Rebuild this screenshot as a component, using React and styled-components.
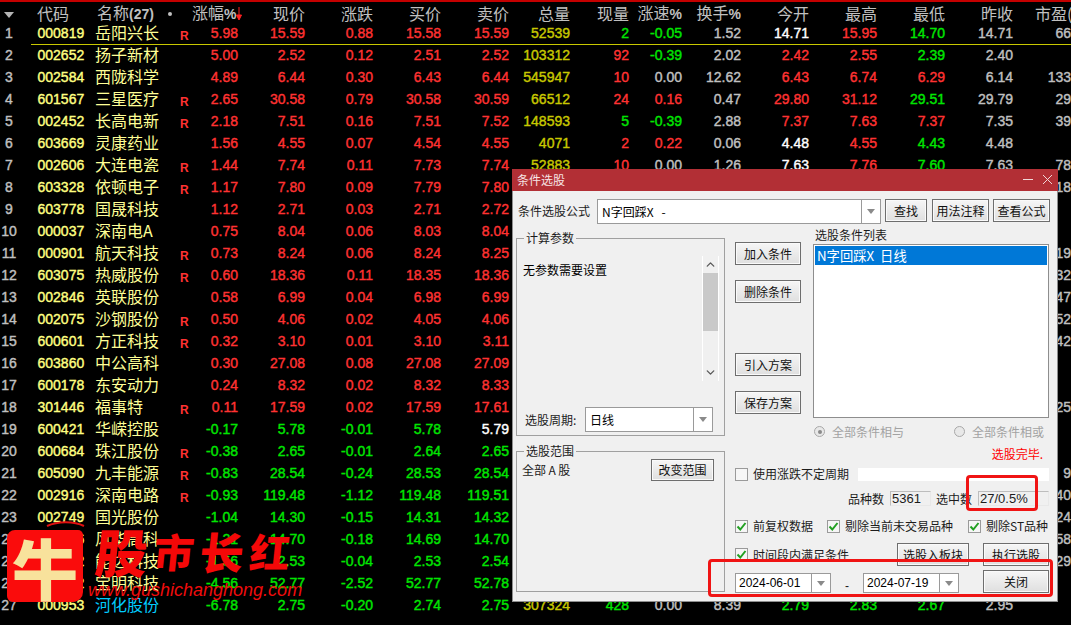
import React from 'react';
import styled, { createGlobalStyle } from 'styled-components';
import { ChevronUp, ChevronDown } from 'lucide-react';

const CJK = '"Noto Sans CJK SC", "Liberation Sans", sans-serif';
const UI = '"Liberation Sans", "Noto Sans CJK SC", sans-serif';
const COLUMNS = '18px 77px 85px 12px 46px 67px 68px 68px 68px 61px 59px 53px 59px 68px 68px 68px 68px 58px';

const TONES = {
    red: '#ff3232',
    green: '#00e600',
    white: '#ffffff',
    gray: '#c0c0c0',
    olive: '#c8c800',
    code: '#ffff80',
    name: '#ffff96',
    cyan: '#00ccff',
};

const GlobalStyle = createGlobalStyle`
    html, body {
        margin: 0;
        padding: 0;
        background: #000;
    }
    #root {
        height: 625px;
    }
`;

const Page = styled.div`
    position: relative;
    width: 1071px;
    height: 625px;
    overflow: hidden;
    background: #000;
    border-top: 2px solid #c40000;
    box-sizing: border-box;
`;

const Row = styled.div`
    position: relative;
    display: grid;
    grid-template-columns: ${COLUMNS};
    height: ${(p) => (p.$header ? '20px' : '22px')};
    align-items: center;
    white-space: nowrap;

    ${(p) => p.$current && `
        &::after {
            content: '';
            position: absolute;
            left: 31px;
            right: 0;
            bottom: -1px;
            height: 1px;
            background: #c8c800;
        }
    `}
`;

const HeadCell = styled.div`
    font-family: ${CJK};
    font-size: 16px;
    line-height: 20px;
    margin-bottom: 8px;
    color: #c0c0c0;
    text-align: ${(p) => (p.$left ? 'left' : 'right')};
    padding-left: ${(p) => p.$pad || 0}px;

    b {
        font-family: ${UI};
        font-size: 14px;
    }
`;

const SortMark = styled.div`
    width: 0;
    height: 0;
    margin: 0 0 5px 4px;
    border-left: 5px solid transparent;
    border-right: 5px solid transparent;
    border-top: 6px solid #b4b4b4;
`;

const HeadDot = styled.span`
    display: inline-block;
    width: 4px;
    height: 4px;
    margin: 0 0 3px 14px;
    border-radius: 50%;
    background: #c0c0c0;
`;

const SortArrow = styled.svg`
    width: 6px;
    height: 14px;
    vertical-align: -2px;
`;

const Cell = styled.div`
    font-family: ${UI};
    font-weight: 400;
    -webkit-text-stroke: 0.4px currentColor;
    font-size: 14px;
    color: ${(p) => TONES[p.$tone] || TONES.gray};
    text-align: right;
`;

const RowNo = styled(Cell)`
    text-align: center;
`;

const CodeCell = styled(Cell)`
    text-align: left;
    padding-left: 19.5px;
`;

const NameCell = styled.div`
    font-family: ${CJK};
    font-size: 16px;
    line-height: 20px;
    margin-bottom: 2px;
    color: ${(p) => TONES[p.$tone]};
`;

const RMark = styled.div`
    font-family: ${UI};
    font-weight: 700;
    font-size: 12px;
    color: #ff3232;
    padding-top: 5px;
`;

/* ---- floating dialog ---- */

const Dialog = styled.div`
    position: absolute;
    left: 512px;
    top: 167px;
    width: 546px;
    height: 433px;
    box-sizing: border-box;
    background: #f0f0f0;
    border: 1px solid #8e8e8e;
    border-top: 0;
    font-family: ${CJK};
    font-size: 12px;
    color: #1c1c1c;
    line-height: 14px;
    white-space: nowrap;
`;

const TitleBar = styled.div`
    display: flex;
    align-items: center;
    height: 22px;
    margin: 0 -1px;
    padding: 0 5px;
    background: #b22f35;
    color: #f6e4e4;
    font-size: 12px;
`;

const WindowIcons = styled.svg`
    margin-left: auto;
    width: 30px;
    height: 12px;
`;

const Body = styled.div`
    padding: 8px 0 0 3px;
`;

const FormulaRow = styled.div`
    display: flex;
    align-items: flex-start;
`;

const FormulaLabel = styled.span`
    width: 72px;
    margin: 5px 7px 0 2px;
`;

const Combo = styled.div`
    display: flex;
    align-items: center;
    flex: none;
    box-sizing: border-box;
    width: ${(p) => p.$w}px;
    height: ${(p) => p.$h}px;
    background: #fff;
    border: 1px solid #9a9a9a;
    margin-right: ${(p) => p.$after || 0}px;
    font-family: ${(p) => (p.$latin ? UI : CJK)};
`;

const ComboText = styled.span`
    flex: 1;
    padding-left: ${(p) => p.$pad || 4}px;
    color: #000;
`;

const ComboButton = styled.span`
    display: flex;
    align-items: center;
    justify-content: center;
    align-self: stretch;
    width: 18px;
    border-left: 1px solid #9a9a9a;

    &::before {
        content: '';
        border-left: 4px solid transparent;
        border-right: 4px solid transparent;
        border-top: 5px solid #8a8a8a;
    }
`;

const Button = styled.div`
    display: flex;
    align-items: center;
    justify-content: center;
    flex: none;
    box-sizing: border-box;
    width: ${(p) => p.$w || 66}px;
    height: ${(p) => p.$h || 23}px;
    margin-left: ${(p) => p.$before || 0}px;
    margin-top: ${(p) => p.$above || 0}px;
    border: 1px solid #6e6e6e;
    box-shadow: inset 0 0 0 1px #fafafa;
    background: linear-gradient(#f6f6f6, #dfdfdf);
    color: #111;
`;

const Columns = styled.div`
    display: flex;
    margin-top: 4px;
`;

const LeftColumn = styled.div`
    width: 209px;
    padding-top: 10px;
`;

const GroupBox = styled.div`
    position: relative;
    box-sizing: border-box;
    height: ${(p) => p.$h}px;
    margin-bottom: 15px;
    border: 1px solid #a0a0a0;
`;

const GroupTitle = styled.span`
    position: absolute;
    left: 7px;
    top: -8px;
    padding: 0 2px;
    background: #f0f0f0;
`;

const ParamPane = styled.div`
    display: flex;
    height: 125px;
    margin-top: 17px;
`;

const ParamText = styled.div`
    padding: 7px 0 0 6px;
    color: #000;
`;

const ScrollBar = styled.div`
    display: flex;
    flex-direction: column;
    align-items: center;
    box-sizing: border-box;
    width: 17px;
    margin: 0 5px 0 auto;
    border-left: 1px solid #fff;
    border-right: 1px solid #fff;
`;

const ScrollArrow = styled.div`
    display: flex;
    align-items: center;
    justify-content: center;
    flex: none;
    height: 17px;
    color: #5a5a5a;
`;

const ScrollThumb = styled.div`
    flex: none;
    width: 15px;
    height: 58px;
    margin-bottom: 33px;
    background: #c9c9c9;
`;

const PeriodRow = styled.div`
    display: flex;
    align-items: center;
    margin-top: 26px;
    padding-left: 8px;
`;

const PeriodLabel = styled.span`
    width: 60px;
`;

const RangeRow = styled.div`
    display: flex;
    align-items: center;
    justify-content: space-between;
    padding: 7px 10px 0 5px;
`;

const SpacedLetter = styled.span`
    margin: 0 2.5px;
`;

const RightColumn = styled.div`
    width: 314px;
    margin-left: 10px;
`;

const UpperRow = styled.div`
    display: flex;
`;

const ButtonStack = styled.div`
    width: 66px;
    padding-top: 14px;
`;

const ConditionPane = styled.div`
    width: 236px;
    margin-left: 12px;
`;

const PaneLabel = styled.div`
    height: 14px;
    padding-left: 2px;
    margin-bottom: 2px;
`;

const ListBox = styled.div`
    box-sizing: border-box;
    height: 174px;
    padding: 1px;
    background: #fff;
    border: 1px solid #8e8e8e;
`;

const ListItem = styled.div`
    height: 19px;
    padding-left: 2px;
    background: #0078d7;
    color: #fff;
    font-size: 13.3px;
    line-height: 19px;
`;

const RadioRow = styled.div`
    display: flex;
    margin-top: 7px;
    padding-left: 1px;
`;

const RadioItem = styled.div`
    display: flex;
    align-items: center;
    flex: none;
    gap: 7px;
    width: 140px;
    height: 13px;
    color: #a2a2a2;
`;

const Radio = styled.span`
    display: flex;
    align-items: center;
    justify-content: center;
    box-sizing: border-box;
    width: 11px;
    height: 11px;
    border: 1px solid #a8a8a8;
    border-radius: 50%;
    background: #e8e8e8;

    ${(p) => p.$on && `
        &::before {
            content: '';
            width: 4px;
            height: 4px;
            border-radius: 50%;
            background: #8a8a8a;
        }
    `}
`;

const StatusText = styled.div`
    margin-top: 9px;
    padding-right: 6px;
    text-align: right;
    color: #ff0000;
`;

const CheckRow = styled.div`
    display: flex;
    align-items: center;
    margin-top: ${(p) => p.$above}px;
`;

const CheckItem = styled.div`
    display: flex;
    align-items: center;
    gap: 5px;
    width: ${(p) => (p.$w ? `${p.$w}px` : 'auto')};
    flex: none;
`;

const CheckBox = styled.span`
    display: flex;
    align-items: center;
    justify-content: center;
    box-sizing: border-box;
    width: 13px;
    height: 13px;
    border: 1px solid #9a9a9a;
    background: #f6f6f6;
`;

const PeriodInput = styled.div`
    flex: 1;
    height: 13px;
    margin-left: 9px;
    background: #fff;
`;

const StatsRow = styled.div`
    display: flex;
    align-items: center;
    justify-content: flex-end;
    margin-top: 10px;
`;

const StatValue = styled.div`
    box-sizing: border-box;
    width: ${(p) => p.$w}px;
    height: 15px;
    margin-left: 6px;
    margin-right: ${(p) => p.$after || 0}px;
    padding-left: 1px;
    border: 1px solid #d4d4d4;
    border-color: #bdbdbd #e8e8e8 #e8e8e8 #bdbdbd;
    font-family: ${UI};
    line-height: 13px;
    font-size: 13px;
`;

const DateRow = styled.div`
    display: flex;
    align-items: flex-end;
    margin-top: 4px;
`;

const DateDash = styled.span`
    width: 32px;
    text-align: center;
    font-family: ${UI};
`;

const Annotation = styled.div`
    position: absolute;
    left: ${(p) => p.$left}px;
    top: ${(p) => p.$top}px;
    width: ${(p) => p.$w}px;
    height: ${(p) => p.$h}px;
    box-sizing: border-box;
    border: 3px solid #f01414;
    border-radius: 4px;
`;

/* ---- watermark ---- */

const Seal = styled.div`
    position: absolute;
    left: 7px;
    top: 528px;
    display: flex;
    align-items: center;
    justify-content: center;
    width: 76px;
    height: 72px;
    border-radius: 8px 5px 10px 6px;
    background: #fa0c0c;
    color: #f8e29c;
    font-family: ${CJK};
    font-weight: 900;
    font-size: 66px;
    line-height: 72px;
`;

const Flourish = styled.svg`
    position: absolute;
    left: 44px;
    top: 516px;
    width: 44px;
    height: 10px;
`;

const Brand = styled.div`
    position: absolute;
    left: 96px;
    top: 522px;
    display: flex;
    align-items: center;
    gap: 6px;
    height: 54px;
    color: #f40808;
    font-family: ${CJK};
    font-weight: 900;
    transform: skewX(-6deg);
`;

const BrandChar = styled.span`
    font-size: ${(p) => p.$size}px;
    line-height: 54px;
`;

const SiteUrl = styled.div`
    position: absolute;
    left: 88px;
    top: 577px;
    color: #f00c0c;
    font-family: ${UI};
    font-style: italic;
    font-size: 18px;
    line-height: 22px;
    white-space: nowrap;
`;

const ROWS = [
    { code: '000819', name: '岳阳兴长', r: 1, v: ['5.98', '15.59', '0.88', '15.58', '15.59'], pe: '66',
      ext: ['52539', '2', 'green', '-0.05', '1.52', '14.71', '15.95', '14.70', '14.71'] },
    { code: '002652', name: '扬子新材', v: ['5.00', '2.52', '0.12', '2.51', '2.52'],
      ext: ['103312', '92', 'red', '-0.39', '2.02', '2.42', '2.55', '2.39', '2.40'] },
    { code: '002584', name: '西陇科学', v: ['4.89', '6.44', '0.30', '6.43', '6.44'], pe: '133',
      ext: ['545947', '10', 'red', '0.00', '12.62', '6.43', '6.74', '6.29', '6.14'] },
    { code: '601567', name: '三星医疗', r: 1, v: ['2.65', '30.58', '0.79', '30.58', '30.59'], pe: '29',
      ext: ['66512', '24', 'red', '0.16', '0.47', '29.80', '31.12', '29.51', '29.79'] },
    { code: '002452', name: '长高电新', r: 1, v: ['2.18', '7.51', '0.16', '7.51', '7.52'], pe: '39',
      ext: ['148593', '5', 'green', '-0.39', '2.88', '7.37', '7.63', '7.37', '7.35'] },
    { code: '603669', name: '灵康药业', v: ['1.56', '4.55', '0.07', '4.54', '4.55'],
      ext: ['4071', '2', 'red', '0.22', '0.06', '4.48', '4.55', '4.43', '4.48'] },
    { code: '002606', name: '大连电瓷', r: 1, v: ['1.44', '7.74', '0.11', '7.73', '7.74'], pe: '78',
      ext: ['52883', '10', 'red', '0.00', '1.26', '7.63', '7.76', '7.60', '7.63'] },
    { code: '603328', name: '依顿电子', r: 1, v: ['1.17', '7.80', '0.09', '7.79', '7.80'], pe: '18' },
    { code: '603778', name: '国晟科技', v: ['1.12', '2.71', '0.03', '2.71', '2.72'] },
    { code: '000037', name: '深南电A', v: ['0.75', '8.04', '0.06', '8.03', '8.04'] },
    { code: '000901', name: '航天科技', r: 1, v: ['0.73', '8.24', '0.06', '8.24', '8.25'], pe: '19' },
    { code: '603075', name: '热威股份', r: 1, v: ['0.60', '18.36', '0.11', '18.35', '18.36'], pe: '32' },
    { code: '002846', name: '英联股份', v: ['0.58', '6.99', '0.04', '6.98', '6.99'], pe: '47' },
    { code: '002075', name: '沙钢股份', r: 1, v: ['0.50', '4.06', '0.02', '4.05', '4.06'], pe: '52' },
    { code: '600601', name: '方正科技', r: 1, v: ['0.32', '3.10', '0.01', '3.10', '3.11'], pe: '42' },
    { code: '603860', name: '中公高科', v: ['0.30', '27.08', '0.08', '27.08', '27.09'] },
    { code: '600178', name: '东安动力', v: ['0.24', '8.32', '0.02', '8.32', '8.33'] },
    { code: '301446', name: '福事特', r: 1, v: ['0.11', '17.59', '0.02', '17.59', '17.61'], pe: '25' },
    { code: '600421', name: '华嵘控股', v: ['-0.17', '5.78', '-0.01', '5.78', '5.79'], askTone: 'white' },
    { code: '600684', name: '珠江股份', r: 1, v: ['-0.38', '2.65', '-0.01', '2.64', '2.65'] },
    { code: '605090', name: '九丰能源', r: 1, v: ['-0.83', '28.54', '-0.24', '28.53', '28.54'], pe: '9' },
    { code: '002916', name: '深南电路', r: 1, v: ['-0.93', '119.48', '-1.12', '119.48', '119.51'], pe: '40' },
    { code: '002749', name: '国光股份', v: ['-1.04', '14.30', '-0.15', '14.31', '14.32'], pe: '24' },
    { code: '000636', name: '风华高科', v: ['-1.21', '14.70', '-0.18', '14.69', '14.70'], pe: '58' },
    { code: '002262', name: '能达科技', v: ['-1.56', '2.53', '-0.04', '2.53', '2.54'], pe: '29' },
    { code: '002992', name: '宝明科技', v: ['-4.56', '52.77', '-2.52', '52.77', '52.78'] },
    { code: '000953', name: '河化股份', nameTone: 'cyan', v: ['-6.78', '2.75', '-0.20', '2.74', '2.75'],
      ext: ['307324', '428', 'green', '0.00', '8.39', '2.79', '2.83', '2.67', '2.95'] },
];

const HEADS = ['现价', '涨跌', '买价', '卖价', '总量', '现量'];

const signTone = (text) => {
    const n = parseFloat(text);
    if (n > 0) return 'red';
    if (n < 0) return 'green';
    return 'gray';
};

const priceTone = (text, prev) => {
    const n = parseFloat(text);
    const base = parseFloat(prev);
    if (n > base) return 'red';
    if (n < base) return 'green';
    return 'white';
};

const Header = () => (
    <Row $header>
        <SortMark />
        <HeadCell $left $pad={19}>代码</HeadCell>
        <HeadCell $left $pad={2}>名称<b>(27)</b><HeadDot /></HeadCell>
        <div />
        <HeadCell>
            涨幅<b>%</b>
            <SortArrow viewBox="0 0 6 14">
                <path d="M3 0V12M0.5 8L3 13L5.5 8Z" stroke="#ff2020" fill="#ff2020" strokeWidth="1" />
            </SortArrow>
        </HeadCell>
        {HEADS.map((h) => <HeadCell key={h}>{h}</HeadCell>)}
        <HeadCell>涨速<b>%</b></HeadCell>
        <HeadCell>换手<b>%</b></HeadCell>
        <HeadCell>今开</HeadCell>
        <HeadCell>最高</HeadCell>
        <HeadCell>最低</HeadCell>
        <HeadCell>昨收</HeadCell>
        <HeadCell $left $pad={22}>市盈(动)</HeadCell>
    </Row>
);

const StockRow = ({ row, index }) => {
    const tone = signTone(row.v[0]);
    const [vol, cur, curTone, speed, turn, open, high, low, prev] = row.ext || [];
    return (
        <Row $current={index === 0}>
            <RowNo>{index + 1}</RowNo>
            <CodeCell $tone="code">{row.code}</CodeCell>
            <NameCell $tone={row.nameTone || 'name'}>{row.name}</NameCell>
            <RMark>{row.r ? 'R' : ''}</RMark>
            <Cell $tone={tone}>{row.v[0]}</Cell>
            <Cell $tone={tone}>{row.v[1]}</Cell>
            <Cell $tone={tone}>{row.v[2]}</Cell>
            <Cell $tone={tone}>{row.v[3]}</Cell>
            <Cell $tone={row.askTone || tone}>{row.v[4]}</Cell>
            <Cell $tone="olive">{vol}</Cell>
            <Cell $tone={curTone}>{cur}</Cell>
            <Cell $tone={signTone(speed)}>{speed}</Cell>
            <Cell>{turn}</Cell>
            <Cell $tone={priceTone(open, prev)}>{open}</Cell>
            <Cell $tone={priceTone(high, prev)}>{high}</Cell>
            <Cell $tone={priceTone(low, prev)}>{low}</Cell>
            <Cell>{prev}</Cell>
            <Cell>{row.pe}</Cell>
        </Row>
    );
};

const Tick = () => (
    <svg width="11" height="11" viewBox="0 0 11 11">
        <path d="M1.5 5.5L4.3 8.5L9.5 2" fill="none" stroke="#22a022" strokeWidth="2" />
    </svg>
);

const Check = ({ on, label, w }) => (
    <CheckItem $w={w}>
        <CheckBox>{on && <Tick />}</CheckBox>
        {label}
    </CheckItem>
);

const ConditionDialog = () => (
    <Dialog>
        <TitleBar>
            条件选股
            <WindowIcons viewBox="0 0 30 12">
                <path d="M0 5.5H10" stroke="#f0d8d8" strokeWidth="1" />
                <path d="M20 1L29 10M29 1L20 10" stroke="#f0d8d8" strokeWidth="1" />
            </WindowIcons>
        </TitleBar>
        <Body>
            <FormulaRow>
                <FormulaLabel>条件选股公式</FormulaLabel>
                <Combo $w={284} $h={25}>
                    <ComboText>N字回踩X&nbsp;&nbsp; -</ComboText>
                    <ComboButton />
                </Combo>
                <Button $w={42} $before={4}>查找</Button>
                <Button $w={57} $before={5}>用法注释</Button>
                <Button $w={57} $before={4}>查看公式</Button>
            </FormulaRow>
            <Columns>
                <LeftColumn>
                    <GroupBox $h={198}>
                        <GroupTitle>计算参数</GroupTitle>
                        <ParamPane>
                            <ParamText>无参数需要设置</ParamText>
                            <ScrollBar>
                                <ScrollArrow><ChevronUp size={13} strokeWidth={2.5} /></ScrollArrow>
                                <ScrollThumb />
                                <ScrollArrow><ChevronDown size={13} strokeWidth={2.5} /></ScrollArrow>
                            </ScrollBar>
                        </ParamPane>
                        <PeriodRow>
                            <PeriodLabel>选股周期:</PeriodLabel>
                            <Combo $w={128} $h={25}>
                                <ComboText>日线</ComboText>
                                <ComboButton />
                            </Combo>
                        </PeriodRow>
                    </GroupBox>
                    <GroupBox $h={141}>
                        <GroupTitle>选股范围</GroupTitle>
                        <RangeRow>
                            <span>全部<SpacedLetter>A</SpacedLetter>股</span>
                            <Button $w={63} $h={22}>改变范围</Button>
                        </RangeRow>
                    </GroupBox>
                </LeftColumn>
                <RightColumn>
                    <UpperRow>
                        <ButtonStack>
                            <Button>加入条件</Button>
                            <Button $above={15}>删除条件</Button>
                            <Button $above={50}>引入方案</Button>
                            <Button $above={15}>保存方案</Button>
                        </ButtonStack>
                        <ConditionPane>
                            <PaneLabel>选股条件列表</PaneLabel>
                            <ListBox>
                                <ListItem>N字回踩X&nbsp; 日线</ListItem>
                            </ListBox>
                            <RadioRow>
                                <RadioItem><Radio $on />全部条件相与</RadioItem>
                                <RadioItem><Radio />全部条件相或</RadioItem>
                            </RadioRow>
                            <StatusText>选股完毕.</StatusText>
                        </ConditionPane>
                    </UpperRow>
                    <CheckRow $above={6}>
                        <Check label="使用涨跌不定周期" />
                        <PeriodInput />
                    </CheckRow>
                    <StatsRow>
                        品种数
                        <StatValue $w={41} $after={5}>5361</StatValue>
                        选中数
                        <StatValue $w={71}>27/0.5%</StatValue>
                    </StatsRow>
                    <CheckRow $above={13}>
                        <Check on label="前复权数据" w={92} />
                        <Check on label="剔除当前未交易品种" w={141} />
                        <Check on label="剔除ST品种" />
                    </CheckRow>
                    <CheckRow $above={10}>
                        <Check on label="时间段内满足条件" />
                        <Button $w={72} $before={48}>选股入板块</Button>
                        <Button $before={14}>执行选股</Button>
                    </CheckRow>
                    <DateRow>
                        <Combo $w={96} $h={20} $latin>
                            <ComboText $pad={3}>2024-06-01</ComboText>
                            <ComboButton />
                        </Combo>
                        <DateDash>-</DateDash>
                        <Combo $w={96} $h={20} $after={24} $latin>
                            <ComboText $pad={3}>2024-07-19</ComboText>
                            <ComboButton />
                        </Combo>
                        <Button>关闭</Button>
                    </DateRow>
                </RightColumn>
            </Columns>
        </Body>
        <Annotation $left={453} $top={306} $w={72} $h={36} />
        <Annotation $left={195} $top={390} $w={345} $h={38} />
    </Dialog>
);

const Watermark = () => (
    <>
        <Flourish viewBox="0 0 44 10">
            <path d="M3 8C14 3 30 3 40 8" fill="none" stroke="#e01010" strokeWidth="2" />
        </Flourish>
        <Seal>牛</Seal>
        <Brand>
            <BrandChar $size={52}>股</BrandChar>
            <BrandChar $size={40}>市</BrandChar>
            <BrandChar $size={44}>长</BrandChar>
            <BrandChar $size={40}>红</BrandChar>
        </Brand>
        <SiteUrl>www.gushichanghong.com</SiteUrl>
    </>
);

const App = () => (
    <Page>
        <GlobalStyle />
        <Header />
        {ROWS.map((row, i) => <StockRow key={row.code} row={row} index={i} />)}
        <ConditionDialog />
        <Watermark />
    </Page>
);

export default App;
